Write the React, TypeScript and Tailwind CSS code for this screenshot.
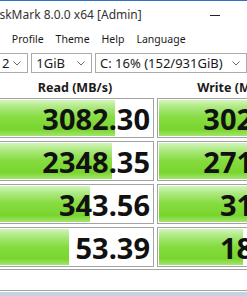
const rows = [
  { read: "3082.30", readBar: 117, write: "3024.87", writeBar: 150 },
  { read: "2348.35", readBar: 114, write: "2715.41", writeBar: 140 },
  { read: "343.56", readBar: 92, write: "318.22", writeBar: 126 },
  { read: "53.39", readBar: 71, write: "184.65", writeBar: 84 },
];

function Chevron() {
  return (
    <svg width="8" height="5" viewBox="0 0 8 5" className="shrink-0">
      <polyline points="0.5,0.5 4,4 7.5,0.5" fill="none" stroke="#6b6b6b" strokeWidth="1" />
    </svg>
  );
}

function Combo({ label, className }: { label: string; className: string }) {
  return (
    <div className={`flex h-[20px] items-center justify-between border border-[#ababab] bg-white pl-[4px] pr-[6px] ${className}`}>
      <span className="pt-[1px] text-[13px] leading-none text-[#1a1a1a]">{label}</span>
      <Chevron />
    </div>
  );
}

function Cell({ value, bar }: { value: string; bar: number }) {
  return (
    <div className="relative h-[40px] w-[158px] shrink-0 border border-[#a3a3a3] bg-white p-[1px]">
      <div
        className="h-full bg-[linear-gradient(to_bottom,#d3f4bb_0%,#a9e87c_22%,#86dc40_48%,#79d52e_82%,#a2e56f_100%)]"
        style={{ width: bar }}
      />
      <div className="absolute inset-0 flex items-center justify-end pr-[3px] text-[29px] font-bold leading-none text-[#111]">
        {value}
      </div>
    </div>
  );
}

export default function App() {
  return (
    <div
      className="flex h-[296px] w-[247px] flex-col overflow-hidden bg-white"
      style={{ fontFamily: '"Noto Sans", "Open Sans", sans-serif' }}
    >
      <div className="h-[1px] shrink-0 bg-[#2a73c8]" />

      {/* title bar */}
      <div className="flex h-[28px] shrink-0 items-center">
        <span className="-ml-[51px] whitespace-nowrap text-[12px] text-[#333]">CrystalDiskMark 8.0.0 x64 [Admin]</span>
        <div className="ml-auto mr-[27px] h-[1px] w-[10px] bg-[#222]" />
      </div>

      {/* menu */}
      <div className="flex h-[22px] shrink-0 items-center whitespace-nowrap text-[10.5px] text-[#1a1a1a]">
        <span className="-ml-[23px] px-[6px]">File</span>
        <span className="px-[6px]">Profile</span>
        <span className="px-[6px]">Theme</span>
        <span className="px-[6px]">Help</span>
        <span className="px-[6px]">Language</span>
      </div>

      {/* toolbar */}
      <div className="mt-[2px] flex shrink-0 items-center gap-[3px]">
        <Combo label="2" className="-ml-[3px] w-[33px] pl-[4px]" />
        <Combo label="1GiB" className="w-[65px]" />
        <Combo label="C: 16% (152/931GiB)" className="w-[152px] shrink-0" />
      </div>

      {/* header */}
      <div className="-ml-[4px] flex h-[25px] shrink-0 items-end gap-[3px] text-[12.5px] font-bold text-[#1a1a1a]">
        <div className="w-[158px] shrink-0 text-center">Read (MB/s)</div>
        <div className="w-[158px] shrink-0 text-center">Write (MB/s)</div>
      </div>

      {/* results */}
      <div className="-ml-[4px] flex shrink-0 flex-col gap-[3px]">
        {rows.map((r) => (
          <div key={r.read} className="flex gap-[3px]">
            <Cell value={r.read} bar={r.readBar} />
            <Cell value={r.write} bar={r.writeBar} />
          </div>
        ))}
      </div>

      {/* comment */}
      <div className="-ml-[4px] mt-[2px] h-[22px] w-[260px] shrink-0 border border-[#a3a3a3] bg-white" />
      <div className="mt-[1px] flex-1 bg-[#c4d3e2]" />
    </div>
  );
}
